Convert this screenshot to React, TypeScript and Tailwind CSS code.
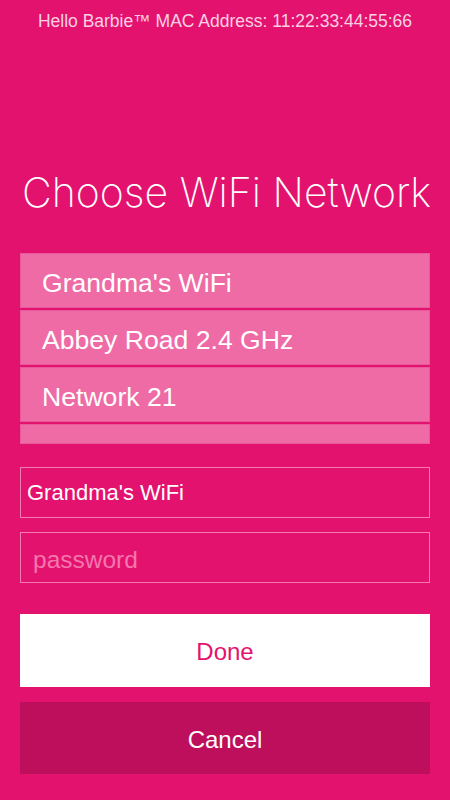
const networks = ["Grandma's WiFi", "Abbey Road 2.4 GHz", "Network 21"];

export default function App() {
  return (
    <div className="w-[450px] h-[800px] bg-[#e4126f] flex flex-col font-['Liberation_Sans',Arial,sans-serif] text-white">
      <div className="pt-[11px] text-center text-[17.5px] leading-[20px] text-[#fbd0e2]">
        Hello Barbie™ MAC Address: 11:22:33:44:55:66
      </div>

      <h1 className="mt-[137px] pl-[22px] text-[41px] leading-[48px] font-extralight font-['Inter',sans-serif] whitespace-nowrap">
        Choose WiFi Network
      </h1>

      <div className="mt-[37px] mx-5 flex flex-col gap-[2px]">
        {networks.map((n) => (
          <div
            key={n}
            className="h-[55px] pt-[4px] pl-[21px] bg-[#ef6ba6] text-[26.6px] leading-[51px] border border-[#e9589a]"
          >
            {n}
          </div>
        ))}
        <div className="h-[20px] bg-[#ef6ba6] border border-[#e9589a]" />
      </div>

      <div className="mt-[23px] mx-5 flex flex-col gap-[14px]">
        <input
          defaultValue="Grandma's WiFi"
          className="h-[51px] border border-[#f27bb0] bg-transparent pl-[6px] pt-[1px] text-[22px] text-white outline-none"
        />
        <input
          placeholder="password"
          type="password"
          className="h-[51px] border border-[#f27bb0] bg-transparent pl-[12px] pt-[4px] text-[24.5px] text-white outline-none placeholder:text-[#f476ae]"
        />
      </div>

      <div className="mt-[31px] mx-5 flex flex-col gap-[15px]">
        <button className="h-[73px] pt-[3px] bg-white text-[#e4126f] text-[24px]">Done</button>
        <button className="h-[72px] pt-[4px] bg-[#bd0f5b] text-white text-[24px]">Cancel</button>
      </div>
    </div>
  );
}
